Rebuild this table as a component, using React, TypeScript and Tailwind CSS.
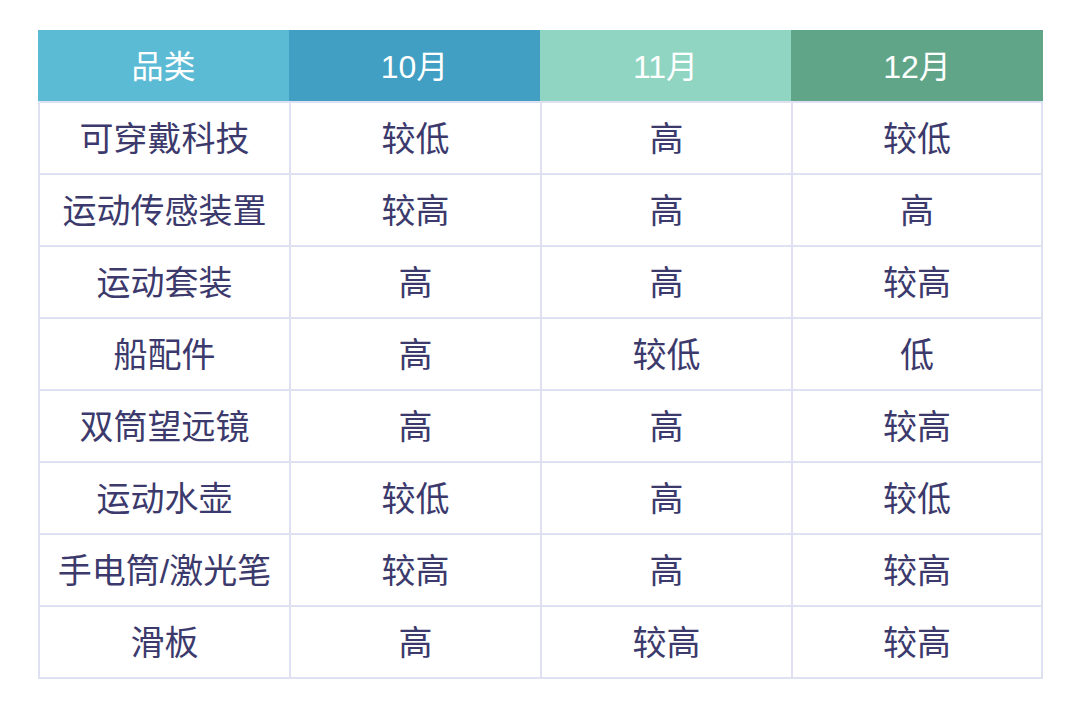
import * as React from 'react';

const rows: string[][] = [
  ['可穿戴科技', '较低', '高', '较低'],
  ['运动传感装置', '较高', '高', '高'],
  ['运动套装', '高', '高', '较高'],
  ['船配件', '高', '较低', '低'],
  ['双筒望远镜', '高', '高', '较高'],
  ['运动水壶', '较低', '高', '较低'],
  ['手电筒/激光笔', '较高', '高', '较高'],
  ['滑板', '高', '较高', '较高'],
];

export default function App() {
  return (
    <div className="min-h-[710px] w-[1080px] bg-white pl-[38px] pt-[30px] font-['Liberation_Sans','Noto_Sans_CJK_SC',sans-serif]">
      <div className="grid h-[71px] grid-cols-[251px_251px_251px_252px] text-[32px] text-white">
        <div className="flex items-center justify-center bg-[#5bbad4] pt-[2px]">品类</div>
        <div className="flex items-center justify-center bg-[#429fc4] pt-[2px]">10月</div>
        <div className="flex items-center justify-center bg-[#8fd5c1] pt-[2px]">11月</div>
        <div className="flex items-center justify-center bg-[#61a589] pt-[2px]">12月</div>
      </div>
      <div className="grid w-[1005px] grid-cols-[249px_249px_249px_248px] gap-[2px] bg-[#dfe0f1] p-[2px] text-[34px] text-[#3c3a6c]">
        {rows.map((row, i) =>
          row.map((cell, j) => (
            <div key={`${i}-${j}`} className="flex h-[70px] items-center justify-center bg-white pt-[3px]">
              {cell}
            </div>
          ))
        )}
      </div>
    </div>
  );
}
